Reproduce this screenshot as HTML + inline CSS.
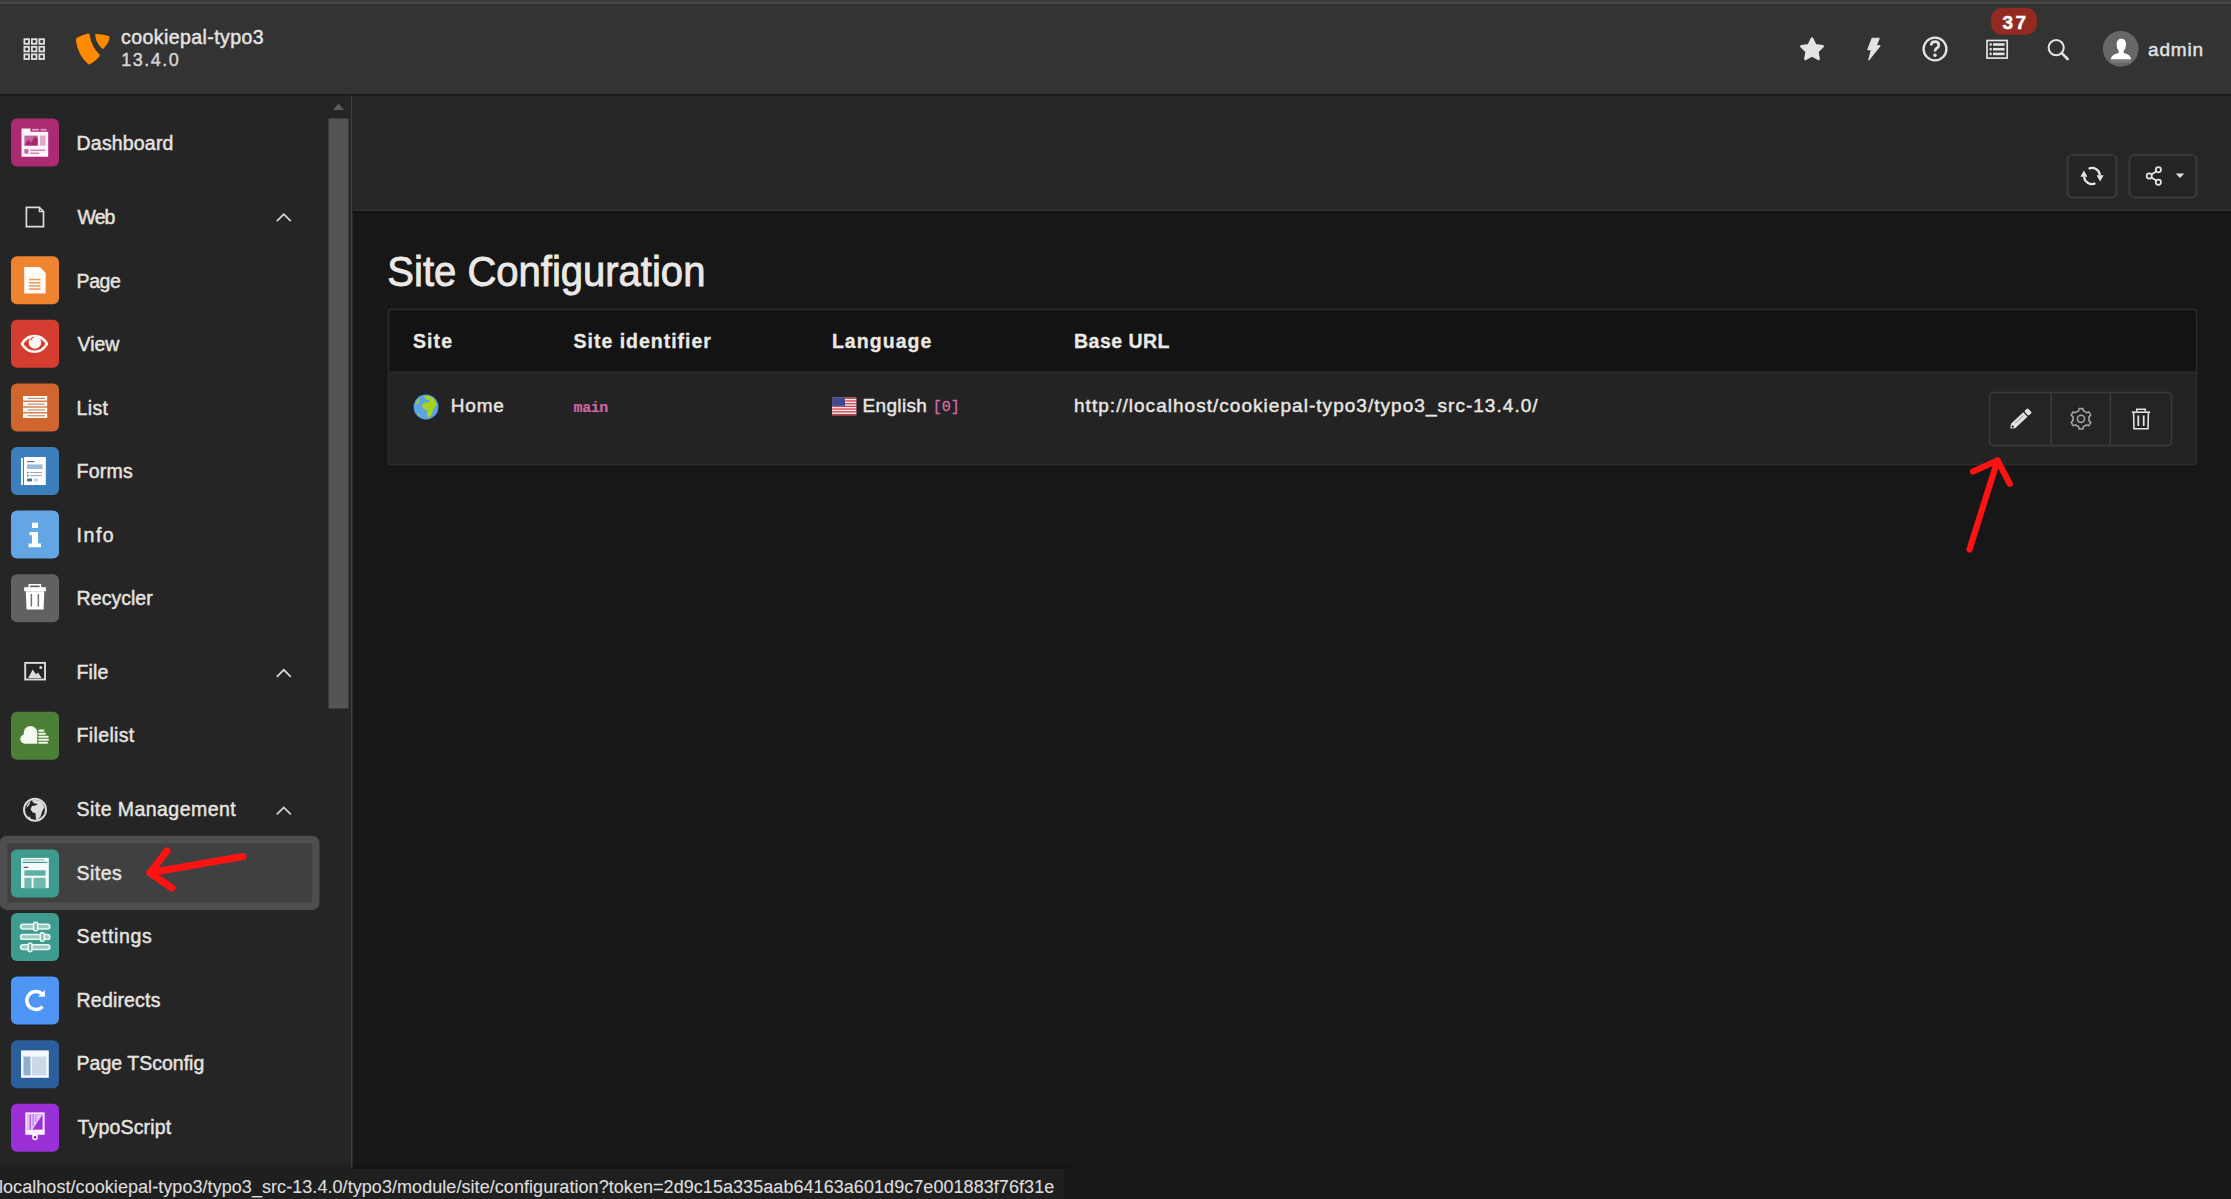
<!DOCTYPE html>
<html><head><meta charset="utf-8"><title>Site Configuration</title>
<style>
html,body{margin:0;padding:0;width:2231px;height:1199px;overflow:hidden;background:#171717}
svg{position:absolute;left:0;top:0;display:block}
</style></head><body>
<svg width="2231" height="1199" viewBox="0 0 2231 1199">
<!-- backgrounds -->
<rect x="0" y="0" width="2231" height="1199" fill="#171717"/>
<rect x="0" y="0" width="2231" height="95" fill="#333333"/>
<rect x="0" y="0" width="2231" height="2" fill="#3b3b3b"/>
<rect x="0" y="2" width="2231" height="2" fill="#464646"/>
<rect x="0" y="4" width="2231" height="1.5" fill="#2f2f2f"/>
<rect x="0" y="90" width="2231" height="1" fill="#373737"/>
<rect x="0" y="94" width="2231" height="1.5" fill="#1b1b1b"/>
<rect x="0" y="95.5" width="351" height="1103.5" fill="#252525"/>
<rect x="351" y="95.5" width="1.5" height="1073" fill="#424242"/>
<rect x="352.5" y="95.5" width="1878.5" height="114" fill="#262626"/>
<rect x="352.5" y="209.5" width="1878.5" height="1.5" fill="#323232"/>
<rect x="352.5" y="211" width="1878.5" height="1.5" fill="#121212"/>
<!-- scrollbar -->
<path d="M333 110 L338.5 103.5 L344 110 Z" fill="#5c5c5c"/>
<rect x="328.5" y="118.5" width="20" height="590" fill="#545454"/>
<!-- docheader buttons -->
<rect x="2067.5" y="155" width="49" height="42.5" rx="5" fill="#242424" stroke="#3a3a3a" stroke-width="2"/>
<rect x="2129.5" y="155" width="67" height="42.5" rx="5" fill="#242424" stroke="#3a3a3a" stroke-width="2"/>
<!-- table card -->
<rect x="388.5" y="309.5" width="1808" height="155" rx="3" fill="#232323" stroke="#2c2c2c" stroke-width="1.5"/>
<path d="M389.25 372 V312.5 a2.25 2.25 0 0 1 2.25 -2.25 H2193.5 a2.25 2.25 0 0 1 2.25 2.25 V372 Z" fill="#131313"/>
<rect x="389.25" y="371.5" width="1807" height="1.5" fill="#2a2a2a"/>
<!-- row buttons -->
<rect x="1989.5" y="392.5" width="182" height="53" rx="3.5" fill="#242424" stroke="#3b3b3b" stroke-width="1.5"/>
<rect x="2050.5" y="392.5" width="1.5" height="53" fill="#3b3b3b"/>
<rect x="2109.5" y="392.5" width="1.5" height="53" fill="#3b3b3b"/>
<!-- active sidebar item -->
<rect x="3.5" y="839.4" width="312.25" height="66.8" rx="3.5" fill="#404040" stroke="#4e4e4e" stroke-width="7.5"/>
<!-- status bubble -->
<defs><linearGradient id="sbg" x1="0" y1="0" x2="0" y2="1"><stop offset="0" stop-color="#000" stop-opacity="0"/><stop offset="1" stop-color="#000" stop-opacity="0.18"/></linearGradient></defs>
<rect x="0" y="1160" width="1072" height="9" fill="url(#sbg)"/>
<rect x="0" y="1169" width="1064.5" height="30" fill="#1f1f1f"/>

<!-- ===== sidebar module icons ===== -->
<!-- Dashboard -->
<g transform="translate(11,118.6)">
<rect x="0" y="0" width="48" height="48" rx="6" fill="#ab2a72"/>
<path d="M10.5 10 H19.5 V13.2 H37.2 V38.2 H10.5 Z" fill="#fdf3f8"/>
<rect x="21" y="10.3" width="7" height="1.6" fill="#e8a8cc"/>
<rect x="29.5" y="10.3" width="6" height="1.6" fill="#e8a8cc"/>
<rect x="13.4" y="17" width="13.3" height="10" fill="#c4649c"/>
<path d="M13.4 27 L17 21 L20 24 L24 18 L26.7 20 V27 Z" fill="#a8286e"/>
<rect x="29" y="17" width="5.6" height="10" fill="#e2a6c8"/>
<rect x="13.4" y="30.5" width="4" height="4.5" fill="#c4649c"/>
<rect x="19.2" y="31" width="15" height="1.3" fill="#c77aa6"/>
<rect x="19.2" y="34" width="9" height="1.3" fill="#c77aa6"/>
</g>
<!-- Web header icon (page outline) -->
<g transform="translate(0,192.6)" fill="none" stroke="#dcdcdc" stroke-width="1.7">
<path d="M26.4 14.7 H39.3 L43.5 18.9 V34 H26.4 Z"/>
<path d="M39.3 14.7 V18.9 H43.5" stroke-width="1.3"/>
</g>
<path d="M276.8 221.2 l7 -7 l7 7" fill="none" stroke="#d8d8d8" stroke-width="1.7"/>
<!-- Page -->
<g transform="translate(11,256.2)">
<rect x="0" y="0" width="48" height="48" rx="6" fill="#ef8430"/>
<path d="M13.2 10.8 H28.8 L34.7 16.6 V37.4 H13.2 Z" fill="#fffaf5"/>
<rect x="17.9" y="22.6" width="11.6" height="1.5" fill="#f0965a"/>
<rect x="17.9" y="25.8" width="11.6" height="1.5" fill="#f0965a"/>
<rect x="17.9" y="29" width="11.6" height="1.5" fill="#f0965a"/>
<rect x="17.9" y="32.1" width="11.6" height="1.5" fill="#f0965a"/>
</g>
<!-- View -->
<g transform="translate(11,319.8)">
<rect x="0" y="0" width="48" height="48" rx="6" fill="#d63d31"/>
<path d="M11 24.1 C15 17.2 19.5 16.3 23.5 16.3 C27.5 16.3 32 17.2 36 24.1 C32 31 27.5 31.9 23.5 31.9 C19.5 31.9 15 31 11 24.1 Z" fill="none" stroke="#fff5f2" stroke-width="2.6" stroke-linejoin="round"/>
<circle cx="23.9" cy="22.6" r="6.3" fill="#fff5f2"/>
<path d="M19.6 20.2 Q20.8 17.6 23 17.2" fill="none" stroke="#d63d31" stroke-width="1.2"/>
</g>
<!-- List -->
<g transform="translate(11,383.4)">
<rect x="0" y="0" width="48" height="48" rx="6" fill="#d0652f"/>
<rect x="12" y="12.6" width="24.2" height="4.6" fill="#fff8f3"/>
<rect x="12" y="18.4" width="24.2" height="4.6" fill="#fff8f3"/>
<rect x="12" y="24.2" width="24.2" height="4.6" fill="#fff8f3"/>
<rect x="12" y="30" width="24.2" height="4.6" fill="#fff8f3"/>
<rect x="16.5" y="14.4" width="17.5" height="1.1" fill="#b88a70"/>
<rect x="16.5" y="20.2" width="17.5" height="1.1" fill="#b88a70"/>
<rect x="16.5" y="26" width="17.5" height="1.1" fill="#b88a70"/>
<rect x="16.5" y="31.8" width="17.5" height="1.1" fill="#b88a70"/>
</g>
<!-- Forms -->
<g transform="translate(11,447.0)">
<rect x="0" y="0" width="48" height="48" rx="6" fill="#3d7fbd"/>
<rect x="10" y="11" width="2" height="27" fill="#e8f2fb"/>
<rect x="13" y="10" width="21.8" height="28" fill="#ffffff"/>
<rect x="16" y="14" width="7.5" height="1.2" fill="#5d7a95"/>
<rect x="16" y="17.4" width="15.5" height="4.6" fill="#9dbbd8"/>
<rect x="16" y="24.8" width="1.6" height="1.6" fill="#5d7a95"/>
<rect x="19" y="25.2" width="12" height="0.9" fill="#7f98ae"/>
<rect x="16" y="27.8" width="1.6" height="1.6" fill="#5d7a95"/>
<rect x="19" y="28.2" width="12" height="0.9" fill="#7f98ae"/>
<rect x="16" y="31.6" width="5" height="2.8" fill="#3e6e9c"/>
<rect x="22.5" y="31.6" width="4.5" height="2.8" fill="#c4d4e2"/>
</g>
<!-- Info -->
<g transform="translate(11,510.6)">
<rect x="0" y="0" width="48" height="48" rx="6" fill="#62a6e3"/>
<rect x="21" y="12.1" width="6" height="5.3" fill="#fff"/>
<path d="M18.5 21.4 H27 V32.8 H30 V36.7 H17.6 V32.8 H21 V24.6 H18.5 Z" fill="#fff"/>
</g>
<!-- Recycler -->
<g transform="translate(11,574.2)">
<rect x="0" y="0" width="48" height="48" rx="6" fill="#5f6163"/>
<path d="M18.3 13.2 V10.5 H29.4 V13.2" fill="none" stroke="#fff" stroke-width="1.6"/>
<rect x="13.2" y="13" width="21.7" height="4" fill="#fff"/>
<path d="M14.8 17 H33.3 L32.6 35.2 H15.5 Z" fill="#fff"/>
<rect x="19.6" y="19.8" width="1.5" height="12.5" fill="#6e7072"/>
<rect x="26.6" y="19.8" width="1.5" height="12.5" fill="#6e7072"/>
</g>
<!-- File header icon -->
<g transform="translate(0,648.2)">
<rect x="25.2" y="14.7" width="19.8" height="16.6" fill="none" stroke="#dcdcdc" stroke-width="1.9"/>
<path d="M28.2 29.8 L32.7 21.2 L36 26 L38 24.2 L41.7 29.8 Z" fill="#dcdcdc"/>
<circle cx="40.8" cy="19.3" r="1.5" fill="#dcdcdc"/>
</g>
<path d="M276.8 676.8 l7 -7 l7 7" fill="none" stroke="#d8d8d8" stroke-width="1.7"/>
<!-- Filelist -->
<g transform="translate(11,711.8)">
<rect x="0" y="0" width="48" height="48" rx="6" fill="#4a7f35"/>
<circle cx="19.5" cy="21" r="6.8" fill="#f6fbf2"/><rect x="14" y="21" width="12.3" height="10.9" fill="#f6fbf2"/><circle cx="14" cy="27.2" r="4.7" fill="#f6fbf2"/>
<rect x="27.2" y="17.8" width="6.2" height="2.1" rx="1" fill="#eef7e8"/>
<rect x="27.2" y="20.9" width="7.8" height="2.1" rx="1" fill="#eef7e8"/>
<rect x="27.2" y="23.9" width="10.5" height="2.1" rx="1" fill="#eef7e8"/>
<rect x="27.2" y="26.9" width="10.8" height="2.1" rx="1" fill="#eef7e8"/>
<rect x="27.2" y="29.9" width="9.8" height="2.1" rx="1" fill="#eef7e8"/>
</g>
<!-- Site management header icon (globe) -->
<g transform="translate(0,785.8)">
<circle cx="35" cy="24" r="11" fill="none" stroke="#dcdcdc" stroke-width="2"/>
<path d="M31.5 14.6 Q35 13.5 39.5 14.8 Q43.5 17.5 44.2 22 L42.2 25.5 L40.5 31 L37 34.5 L35.8 32 L35.5 27.5 L32.5 26.5 L30.5 23.5 L32 20.3 L35.5 19.6 L38 18.3 L34 17.5 Z" fill="#dcdcdc"/>
<path d="M26.5 22 Q27.5 17 30.5 15.5 L29 19.5 Z" fill="#dcdcdc"/>
<path d="M28.5 30 L31 32.5 L30 33.2 Z" fill="#dcdcdc"/>
</g>
<path d="M276.8 814.4 l7 -7 l7 7" fill="none" stroke="#d8d8d8" stroke-width="1.7"/>
<!-- Sites -->
<g transform="translate(11,849.4)">
<rect x="0" y="0" width="48" height="48" rx="6" fill="#3e9b8e"/>
<rect x="10.1" y="8.5" width="27.7" height="30.2" fill="#f2fbf9"/>
<rect x="11.6" y="12.4" width="24.7" height="1.2" fill="#3e9b8e"/>
<rect x="12" y="10" width="21" height="1" fill="#7fb8ae"/>
<rect x="12.7" y="17.4" width="4.5" height="1.2" fill="#45605a"/>
<rect x="13.4" y="20.9" width="21.2" height="5.4" fill="#5fb0a4"/>
<rect x="13.4" y="28.4" width="7.2" height="10.3" fill="#72bab0"/>
<rect x="22.5" y="28.4" width="12.1" height="10.3" fill="#72bab0"/>
</g>
<!-- Settings -->
<g transform="translate(11,913.0)" stroke="#e6f7f4" stroke-width="1.6">
<rect x="0" y="0" width="48" height="48" rx="6" fill="#3e9b8e" stroke="none"/>
<rect x="9.6" y="11.2" width="29.2" height="4.8" rx="2.4" fill="#9ccbc4"/>
<rect x="9.6" y="21.5" width="29.2" height="4.8" rx="2.4" fill="#9ccbc4"/>
<rect x="9.6" y="31.7" width="29.2" height="4.8" rx="2.4" fill="#9ccbc4"/>
<rect x="22.6" y="9.4" width="4" height="8.4" rx="1.6" fill="#7fb5ad"/>
<rect x="29.4" y="19.9" width="3.8" height="8.4" rx="1.6" fill="#7fb5ad"/>
<rect x="17.2" y="30.2" width="3.8" height="8.4" rx="1.6" fill="#7fb5ad"/>
</g>
<!-- Redirects -->
<g transform="translate(11,976.6)">
<rect x="0" y="0" width="48" height="48" rx="6" fill="#4f95f5"/>
<path d="M31.3 17.6 A9 9 0 1 0 31.5 30" fill="none" stroke="#fff" stroke-width="3.4"/>
<path d="M33.9 13.3 V20.2 H27.2 Z" fill="#fff"/>
</g>
<!-- Page TSconfig -->
<g transform="translate(11,1040.2)">
<rect x="0" y="0" width="48" height="48" rx="6" fill="#2a5f9b"/>
<rect x="10" y="10.2" width="27.8" height="27.4" fill="#f4f8fc"/>
<rect x="12.5" y="16.4" width="7" height="18.8" fill="#8eaed2"/>
<rect x="21" y="16.4" width="14.3" height="18.8" fill="#cbd8e7"/>
</g>
<!-- TypoScript -->
<g transform="translate(11,1103.8)">
<rect x="0" y="0" width="48" height="48" rx="6" fill="#9b30d6"/>
<path d="M16.4 10.6 H31.6 L21.5 25.8 H16.4 Z" fill="#e9c6fb"/>
<rect x="18.6" y="11" width="1.2" height="14.8" fill="#a64ddb"/>
<rect x="21.6" y="11" width="1.1" height="11" fill="#b565e2"/>
<rect x="24.4" y="11" width="1" height="7" fill="#c07ae6"/>
<rect x="15.4" y="9.6" width="17.2" height="20.4" fill="none" stroke="#fbeeff" stroke-width="2"/>
<rect x="14.6" y="25.8" width="18.8" height="4.4" fill="#fbeeff"/>
<path d="M21.2 30 H26.8 V33.6 A2.8 2.8 0 0 1 21.2 33.6 Z" fill="#fbeeff"/>
<circle cx="24" cy="33.5" r="1.2" fill="#6a1f96"/>
</g>
<!-- ===== topbar ===== -->
<g fill="none" stroke="#e2e2e2" stroke-width="1.8">
<rect x="24.4" y="39.2" width="4.6" height="4.6"/><rect x="31.9" y="39.2" width="4.6" height="4.6"/><rect x="39.4" y="39.2" width="4.6" height="4.6"/>
<rect x="24.4" y="46.8" width="4.6" height="4.6"/><rect x="31.9" y="46.8" width="4.6" height="4.6"/><rect x="39.4" y="46.8" width="4.6" height="4.6"/>
<rect x="24.4" y="54.4" width="4.6" height="4.6"/><rect x="31.9" y="54.4" width="4.6" height="4.6"/><rect x="39.4" y="54.4" width="4.6" height="4.6"/>
</g>
<!-- TYPO3 logo -->
<path d="M77.2 38.9 Q82.5 35.6 88.4 34.6 Q89.2 41.5 93 48.2 Q95.6 52.4 98.8 55.3 Q94 61.4 89 63.3 Q84.6 59.8 81.3 54 Q78.2 48 77.2 41.8 Z" fill="#ff8a00" stroke="#ff8a00" stroke-width="2.2" stroke-linejoin="round"/>
<path d="M96.3 35 Q102.4 35.2 108.5 37 Q108 42.6 102.8 47.7 Q99.2 44.4 97.5 40.4 Q96.6 37.8 96.3 35 Z" fill="#ff8a00" stroke="#ff8a00" stroke-width="2.2" stroke-linejoin="round"/>
<!-- star -->
<path d="M1812.00 38.60 L1815.29 45.27 L1822.65 46.34 L1817.33 51.53 L1818.58 58.86 L1812.00 55.40 L1805.42 58.86 L1806.67 51.53 L1801.35 46.34 L1808.71 45.27 Z" fill="#e4e4e4" stroke="#e4e4e4" stroke-width="2.6" stroke-linejoin="round"/>
<!-- bolt -->
<path d="M1872.2 38.2 L1879.2 38.2 L1876.2 45.8 L1880 45.8 L1868.8 59.8 L1871.4 49.6 L1867.8 49.6 Z" fill="#e4e4e4" stroke="#e4e4e4" stroke-width="1.1" stroke-linejoin="round"/>
<!-- question -->
<circle cx="1935" cy="49" r="11.4" fill="none" stroke="#e4e4e4" stroke-width="2.3"/>
<path d="M1931.2 45.6 Q1931.2 41.6 1935 41.6 Q1938.8 41.6 1938.8 45 Q1938.8 47.2 1936.6 48.3 Q1935 49.1 1935 51.6" fill="none" stroke="#e4e4e4" stroke-width="2.7"/>
<circle cx="1935" cy="55.3" r="1.7" fill="#e4e4e4"/>
<!-- list/notes icon -->
<rect x="1987" y="40.5" width="20.2" height="17.6" fill="none" stroke="#e4e4e4" stroke-width="1.7"/>
<rect x="1989.6" y="43.2" width="2.1" height="2.6" fill="#e4e4e4"/><rect x="1993" y="43.2" width="11.6" height="2.6" fill="#e4e4e4"/>
<rect x="1989.6" y="47.9" width="2.1" height="2.6" fill="#e4e4e4"/><rect x="1993" y="47.9" width="11.6" height="2.6" fill="#e4e4e4"/>
<rect x="1989.6" y="52.6" width="2.1" height="2.6" fill="#e4e4e4"/><rect x="1993" y="52.6" width="11.6" height="2.6" fill="#e4e4e4"/>
<!-- badge -->
<rect x="1991.2" y="8" width="45.8" height="26.7" rx="11" fill="#922a1f"/>
<!-- search -->
<circle cx="2056.2" cy="47.6" r="7.6" fill="none" stroke="#e4e4e4" stroke-width="2"/>
<path d="M2061.8 53.2 L2067.6 59" stroke="#e4e4e4" stroke-width="2.6" stroke-linecap="round"/>
<!-- avatar -->
<circle cx="2120.7" cy="48.8" r="17.9" fill="#676767"/>
<path d="M2121.3 38.7 Q2126 38.7 2126 44.5 Q2126 49 2123.6 51.2 L2123.8 53 Q2130.5 54.4 2131.3 59.5 H2110.6 Q2111.4 54.4 2118.6 53 L2118.8 51.2 Q2116.6 49 2116.6 44.5 Q2116.6 38.7 2121.3 38.7 Z" fill="#ffffff"/>
<rect x="2111" y="59.5" width="20" height="3.2" fill="#7a7a7a"/>
<!-- ===== docheader icons ===== -->
<path d="M2088.6 168.75 A8 8 0 0 1 2099.97 175.3" fill="none" stroke="#e4e4e4" stroke-width="2.2"/>
<path d="M2095.4 183.25 A8 8 0 0 1 2084.03 176.7" fill="none" stroke="#e4e4e4" stroke-width="2.2"/>
<path d="M2096.6 175.3 L2103.6 175.3 L2100.1 181.6 Z" fill="#e4e4e4"/>
<path d="M2080.4 176.7 L2087.4 176.7 L2083.9 170.4 Z" fill="#e4e4e4"/>
<g fill="none" stroke="#e4e4e4" stroke-width="1.7">
<path d="M2149.2 176 L2158 170.3 M2149.2 176 L2158 181.8"/>
<circle cx="2149.2" cy="176" r="2.6" fill="#242424"/>
<circle cx="2158.4" cy="169.8" r="2.6" fill="#242424"/>
<circle cx="2158.4" cy="182.2" r="2.6" fill="#242424"/>
</g>
<path d="M2175.8 173.4 H2184.3 L2180 178 Z" fill="#e4e4e4"/>
<!-- ===== row icons ===== -->
<!-- globe emoji -->
<circle cx="426" cy="407" r="12.4" fill="#5aa2ea"/>
<path d="M423.5 396.2 Q428 395 432 397.3 Q436.4 401.2 436.5 405 L433.3 409.4 L431.4 415.6 L428 418.6 L427 414 L426.6 410 L423.6 409 L421.8 405.6 L423.6 403 L428 402.3 L430.4 400.6 L426.5 399.7 Z" fill="#a6d21e"/>
<path d="M415.5 405 Q416.5 400 419.5 398 L418.6 402.6 Z" fill="#a6d21e"/>
<path d="M417.6 412.5 L420 415.4 L418.6 416 Z" fill="#a6d21e"/>
<!-- US flag -->
<g>
<rect x="832.1" y="397.6" width="24.2" height="17.6" fill="#f4f4f4"/>
<rect x="832.1" y="397.6" width="24.2" height="1.36" fill="#d2414b"/>
<rect x="832.1" y="400.3" width="24.2" height="1.36" fill="#d2414b"/>
<rect x="832.1" y="403" width="24.2" height="1.36" fill="#d2414b"/>
<rect x="832.1" y="405.7" width="24.2" height="1.36" fill="#d2414b"/>
<rect x="832.1" y="408.4" width="24.2" height="1.36" fill="#d2414b"/>
<rect x="832.1" y="411.1" width="24.2" height="1.36" fill="#d2414b"/>
<rect x="832.1" y="413.8" width="24.2" height="1.4" fill="#d2414b"/>
<rect x="832.1" y="397.6" width="12.9" height="8.3" fill="#3f4a8e"/>
</g>
<!-- pencil -->
<g transform="translate(2020,419.5) rotate(-43)">
<path d="M-13.2 0 L-9.5 -3.1 H7.3 V3.1 H-9.5 Z" fill="#e2e2e2"/>
<rect x="8.6" y="-3.1" width="4.8" height="6.2" rx="1.2" fill="#e2e2e2"/>
<circle cx="-10.2" cy="0.2" r="1.1" fill="#242424"/>
<rect x="-6" y="-1" width="11" height="0.8" fill="#9a9a9a"/>
</g>
<!-- gear -->
<g transform="translate(2081,418.8)" fill="none" stroke="#a2a2a2" stroke-width="1.6">
<path d="M-1.9 -10.2 H1.9 L2.5 -7.7 Q4.2 -7.2 5.5 -6.1 L7.9 -6.9 L9.8 -3.6 L7.9 -1.9 Q8.2 0 7.9 1.9 L9.8 3.6 L7.9 6.9 L5.5 6.1 Q4.2 7.2 2.5 7.7 L1.9 10.2 H-1.9 L-2.5 7.7 Q-4.2 7.2 -5.5 6.1 L-7.9 6.9 L-9.8 3.6 L-7.9 1.9 Q-8.2 0 -7.9 -1.9 L-9.8 -3.6 L-7.9 -6.9 L-5.5 -6.1 Q-4.2 -7.2 -2.5 -7.7 Z" stroke-linejoin="round"/>
<circle cx="0" cy="0" r="3.6"/>
</g>
<!-- trash -->
<g fill="none" stroke="#e2e2e2" stroke-width="1.6">
<path d="M2136.8 411.5 V409.2 H2145.2 V411.5"/>
<path d="M2131.8 412.2 H2150.2"/>
<path d="M2133.6 412.4 L2134 428.8 H2148 L2148.4 412.4"/>
<path d="M2138.3 415.6 V426 M2143.7 415.6 V426" stroke-width="1.8"/>
</g>
<!-- ===== red annotation arrows ===== -->
<g fill="none" stroke="#ff1212" stroke-width="7" stroke-linecap="round" stroke-linejoin="round">
<path d="M243 856.5 L150 872.8"/>
<path d="M167 851 L150 872.8 L172 888"/>
</g>
<g fill="none" stroke="#ff1212" stroke-width="6.2" stroke-linecap="round" stroke-linejoin="round">
<path d="M1969.5 549.5 L1997.5 460.5"/>
<path d="M1973 471.5 L1997.5 460.5 L2009.8 483.8"/>
</g>

<text x="121.10" y="44.00" font-family="Liberation Sans" font-weight="400" font-size="19.5" fill="#e4e4e4" stroke="#e4e4e4" stroke-width="0.45" textLength="142.59" lengthAdjust="spacing" xml:space="preserve">cookiepal-typo3</text>
<text x="121.20" y="65.90" font-family="Liberation Sans" font-weight="400" font-size="18" fill="#d6d6d6" stroke="#d6d6d6" stroke-width="0.45" textLength="57.65" lengthAdjust="spacing" xml:space="preserve">13.4.0</text>
<text x="2002.50" y="28.70" font-family="Liberation Sans" font-weight="700" font-size="19" fill="#ffffff" stroke="#ffffff" stroke-width="0.5" textLength="23.54" lengthAdjust="spacing" xml:space="preserve">37</text>
<text x="2148.00" y="55.90" font-family="Liberation Sans" font-weight="400" font-size="19" fill="#e2e2e2" stroke="#e2e2e2" stroke-width="0.45" textLength="55.05" lengthAdjust="spacing" xml:space="preserve">admin</text>
<text x="76.60" y="150.20" font-family="Liberation Sans" font-weight="400" font-size="19.5" fill="#e6e4e0" stroke="#e6e4e0" stroke-width="0.45" textLength="96.81" lengthAdjust="spacing" xml:space="preserve">Dashboard</text>
<text x="77.60" y="224.03" font-family="Liberation Sans" font-weight="400" font-size="19.5" fill="#e6e4e0" stroke="#e6e4e0" stroke-width="0.45" textLength="37.75" lengthAdjust="spacing" xml:space="preserve">Web</text>
<text x="76.60" y="287.53" font-family="Liberation Sans" font-weight="400" font-size="19.5" fill="#e6e4e0" stroke="#e6e4e0" stroke-width="0.45" textLength="44.15" lengthAdjust="spacing" xml:space="preserve">Page</text>
<text x="77.60" y="351.03" font-family="Liberation Sans" font-weight="400" font-size="19.5" fill="#e6e4e0" stroke="#e6e4e0" stroke-width="0.45" textLength="41.82" lengthAdjust="spacing" xml:space="preserve">View</text>
<text x="76.60" y="414.53" font-family="Liberation Sans" font-weight="400" font-size="19.5" fill="#e6e4e0" stroke="#e6e4e0" stroke-width="0.45" textLength="31.36" lengthAdjust="spacing" xml:space="preserve">List</text>
<text x="76.60" y="478.03" font-family="Liberation Sans" font-weight="400" font-size="19.5" fill="#e6e4e0" stroke="#e6e4e0" stroke-width="0.45" textLength="56.25" lengthAdjust="spacing" xml:space="preserve">Forms</text>
<text x="76.60" y="541.53" font-family="Liberation Sans" font-weight="400" font-size="19.5" fill="#e6e4e0" stroke="#e6e4e0" stroke-width="0.45" textLength="37.13" lengthAdjust="spacing" xml:space="preserve">Info</text>
<text x="76.60" y="605.03" font-family="Liberation Sans" font-weight="400" font-size="19.5" fill="#e6e4e0" stroke="#e6e4e0" stroke-width="0.45" textLength="76.16" lengthAdjust="spacing" xml:space="preserve">Recycler</text>
<text x="76.60" y="678.86" font-family="Liberation Sans" font-weight="400" font-size="19.5" fill="#e6e4e0" stroke="#e6e4e0" stroke-width="0.45" textLength="31.72" lengthAdjust="spacing" xml:space="preserve">File</text>
<text x="76.60" y="742.36" font-family="Liberation Sans" font-weight="400" font-size="19.5" fill="#e6e4e0" stroke="#e6e4e0" stroke-width="0.45" textLength="57.67" lengthAdjust="spacing" xml:space="preserve">Filelist</text>
<text x="76.60" y="816.19" font-family="Liberation Sans" font-weight="400" font-size="19.5" fill="#e6e4e0" stroke="#e6e4e0" stroke-width="0.45" textLength="159.04" lengthAdjust="spacing" xml:space="preserve">Site Management</text>
<text x="76.60" y="879.69" font-family="Liberation Sans" font-weight="400" font-size="19.5" fill="#e6e4e0" stroke="#e6e4e0" stroke-width="0.45" textLength="45.16" lengthAdjust="spacing" xml:space="preserve">Sites</text>
<text x="76.60" y="943.19" font-family="Liberation Sans" font-weight="400" font-size="19.5" fill="#e6e4e0" stroke="#e6e4e0" stroke-width="0.45" textLength="75.17" lengthAdjust="spacing" xml:space="preserve">Settings</text>
<text x="76.60" y="1006.69" font-family="Liberation Sans" font-weight="400" font-size="19.5" fill="#e6e4e0" stroke="#e6e4e0" stroke-width="0.45" textLength="83.78" lengthAdjust="spacing" xml:space="preserve">Redirects</text>
<text x="76.60" y="1070.19" font-family="Liberation Sans" font-weight="400" font-size="19.5" fill="#e6e4e0" stroke="#e6e4e0" stroke-width="0.45" textLength="127.66" lengthAdjust="spacing" xml:space="preserve">Page TSconfig</text>
<text x="77.60" y="1133.69" font-family="Liberation Sans" font-weight="400" font-size="19.5" fill="#e6e4e0" stroke="#e6e4e0" stroke-width="0.45" textLength="93.62" lengthAdjust="spacing" xml:space="preserve">TypoScript</text>
<text x="387.34" y="286.00" font-family="Liberation Sans" font-weight="400" font-size="43" fill="#ebe9e6" stroke="#ebe9e6" stroke-width="0.9" textLength="318.06" lengthAdjust="spacingAndGlyphs" xml:space="preserve">Site Configuration</text>
<text x="412.90" y="348.00" font-family="Liberation Sans" font-weight="700" font-size="19.5" fill="#ece9e4" stroke="#ece9e4" stroke-width="0.3" textLength="39.17" lengthAdjust="spacing" xml:space="preserve">Site</text>
<text x="573.60" y="348.00" font-family="Liberation Sans" font-weight="700" font-size="19.5" fill="#ece9e4" stroke="#ece9e4" stroke-width="0.3" textLength="137.23" lengthAdjust="spacing" xml:space="preserve">Site identifier</text>
<text x="831.90" y="348.00" font-family="Liberation Sans" font-weight="700" font-size="19.5" fill="#ece9e4" stroke="#ece9e4" stroke-width="0.3" textLength="99.49" lengthAdjust="spacing" xml:space="preserve">Language</text>
<text x="1074.00" y="348.00" font-family="Liberation Sans" font-weight="700" font-size="19.5" fill="#ece9e4" stroke="#ece9e4" stroke-width="0.3" textLength="95.53" lengthAdjust="spacing" xml:space="preserve">Base URL</text>
<text x="450.80" y="411.80" font-family="Liberation Sans" font-weight="400" font-size="19" fill="#e8e6e2" stroke="#e8e6e2" stroke-width="0.45" textLength="52.99" lengthAdjust="spacing" xml:space="preserve">Home</text>
<text x="573.60" y="411.80" font-family="Liberation Mono" font-weight="700" font-size="15" fill="#d268a6" stroke="#d268a6" stroke-width="0.15" textLength="34.62" lengthAdjust="spacing" xml:space="preserve">main</text>
<text x="862.60" y="411.70" font-family="Liberation Sans" font-weight="400" font-size="19" fill="#e8e6e2" stroke="#e8e6e2" stroke-width="0.45" textLength="64.23" lengthAdjust="spacing" xml:space="preserve">English</text>
<text x="932.80" y="411.40" font-family="Liberation Mono" font-weight="400" font-size="15" fill="#d268a6" stroke="#d268a6" stroke-width="0.35" textLength="27.02" lengthAdjust="spacing" xml:space="preserve">[0]</text>
<text x="1074.00" y="411.80" font-family="Liberation Sans" font-weight="400" font-size="19" fill="#e8e6e2" stroke="#e8e6e2" stroke-width="0.45" textLength="463.57" lengthAdjust="spacing" xml:space="preserve">http://localhost/cookiepal-typo3/typo3_src-13.4.0/</text>
<text x="-1.00" y="1192.70" font-family="Liberation Sans" font-weight="400" font-size="18" fill="#dcdcdc" stroke="#dcdcdc" stroke-width="0.15" textLength="1055.21" lengthAdjust="spacing" xml:space="preserve">localhost/cookiepal-typo3/typo3_src-13.4.0/typo3/module/site/configuration?token=2d9c15a335aab64163a601d9c7e001883f76f31e</text>

</svg>
</body></html>
